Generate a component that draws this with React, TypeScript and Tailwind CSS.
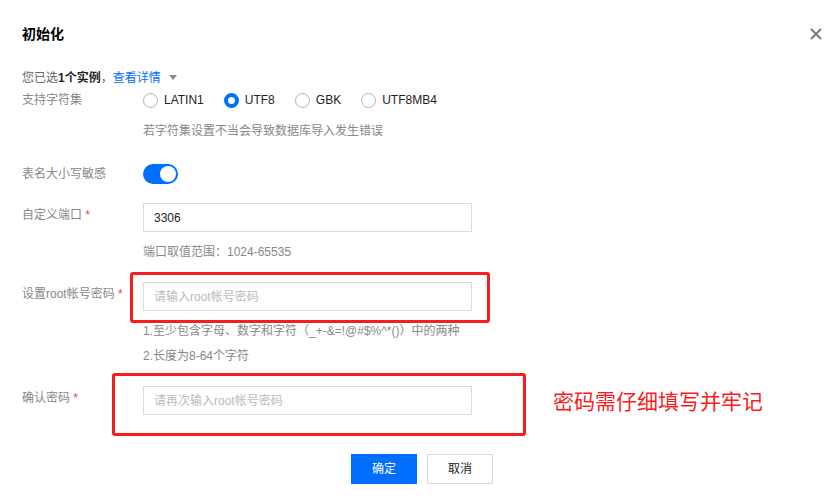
import { useState } from "react";

const font = "font-['Liberation_Sans','Noto_Sans_CJK_SC',sans-serif]";

function Radio({ label, checked }: { label: string; checked?: boolean }) {
    return (
        <div className="flex items-center mr-[20px]">
            {checked ? (
                <span className="w-[15px] h-[15px] rounded-full border-[4px] border-[#006eff] bg-white" />
            ) : (
                <span className="w-[15px] h-[15px] rounded-full border border-[#b5b5b5] bg-white" />
            )}
            <span className="ml-[6px] text-[12px] text-[#222]">{label}</span>
        </div>
    );
}

function Label({ text, required, top }: { text: string; required?: boolean; top?: boolean }) {
    return (
        <div className={"w-[121px] shrink-0 text-[12px] leading-[18px] text-[#888] " + (top ? "pt-[3px]" : "")}>
            {text}
            {required && <span className="text-[#e54545]"> *</span>}
        </div>
    );
}

export default function App() {
    const [charset, setCharset] = useState<string>("UTF8");
    const [sensitive, setSensitive] = useState<boolean>(true);

    return (
        <div className={"w-[835px] h-[498px] bg-white overflow-hidden pt-[26px] " + font}>
            {/* header */}
            <div className="flex justify-between items-center h-[16px] pl-[22px] pr-[13px]">
                <div className="text-[14px] leading-[16px] font-bold text-black">初始化</div>
                <svg width="12" height="12" viewBox="0 0 12 12">
                    <path d="M1 1L11 11M11 1L1 11" stroke="#777" strokeWidth="1.8" />
                </svg>
            </div>

            <div className="px-[22px]">
                <div className="mt-[27px] h-[18px] flex items-center text-[12px] leading-[18px]">
                    <span className="text-[#666]">您已选</span>
                    <span className="font-bold text-[#222]">1个实例</span>
                    <span className="text-[#666]">，</span>
                    <span className="text-[#006eff]">查看详情</span>
                    <svg className="ml-[8px]" width="8" height="6" viewBox="0 0 8 6">
                        <path d="M0 0H8L4 5Z" fill="#888" />
                    </svg>
                </div>

                <div className="mt-[3px] h-[20px] flex items-center">
                    <Label text="支持字符集" />
                    <div className="flex items-center" onClick={() => setCharset(charset)}>
                        <Radio label="LATIN1" />
                        <Radio label="UTF8" checked={charset === "UTF8"} />
                        <Radio label="GBK" />
                        <Radio label="UTF8MB4" />
                    </div>
                </div>

                <div className="mt-[12px] pl-[121px] text-[12px] leading-[18px] text-[#888]">
                    若字符集设置不当会导致数据库导入发生错误
                </div>

                <div className="mt-[24px] h-[20px] flex items-center">
                    <Label text="表名大小写敏感" />
                    <div
                        onClick={() => setSensitive(!sensitive)}
                        className="w-[35px] h-[20px] rounded-full bg-[#006eff] flex items-center justify-end px-[2px]"
                    >
                        <span className="w-[16px] h-[16px] rounded-full bg-white" />
                    </div>
                </div>

                <div className="mt-[19px] flex">
                    <Label text="自定义端口" required top />
                    <div className="w-[329px] h-[29px] border border-[#dcdcdc] flex items-center px-[10px] text-[12px] text-[#222]">
                        3306
                    </div>
                </div>

                <div className="mt-[11px] pl-[121px] text-[12px] leading-[18px] text-[#888]">
                    端口取值范围：1024-65535
                </div>

                <div className="mt-[21px] flex">
                    <Label text="设置root帐号密码" required top />
                    <div className="relative">
                        <div className="w-[329px] h-[29px] border border-[#dcdcdc] flex items-center px-[10px] text-[12px] text-[#bbb]">
                            请输入root帐号密码
                        </div>
                        <div className="absolute left-[-13px] top-[-10px] w-[360px] h-[51px] border-[3px] border-[#f81d1d] rounded-[3px]" />
                    </div>
                </div>

                <div className="mt-[11px] pl-[121px] text-[12px] leading-[18px] text-[#888]">
                    1.至少包含字母、数字和字符（_+-&=!@#$%^*()）中的两种
                </div>
                <div className="mt-[7px] pl-[121px] text-[12px] leading-[18px] text-[#888]">
                    2.长度为8-64个字符
                </div>

                <div className="mt-[21px] flex">
                    <Label text="确认密码" required top />
                    <div className="relative">
                        <div className="w-[329px] h-[29px] border border-[#dcdcdc] flex items-center px-[10px] text-[12px] text-[#bbb]">
                            请再次输入root帐号密码
                        </div>
                        <div className="absolute left-[-31px] top-[-13px] w-[414px] h-[63px] border-[3px] border-[#f81d1d] rounded-[3px]" />
                    </div>
                    <div className="ml-[81px] mt-[4px] text-[21px] leading-[24px] text-[#f81d1d]">密码需仔细填写并牢记</div>
                </div>
            </div>

            <div className="mt-[39px] flex justify-center pl-[9px] gap-[10px]">
                <button className="w-[66px] h-[30px] bg-[#006eff] text-white text-[12px]">确定</button>
                <button className="w-[66px] h-[30px] border border-[#d9d9d9] bg-white text-[#222] text-[12px]">取消</button>
            </div>
        </div>
    );
}
